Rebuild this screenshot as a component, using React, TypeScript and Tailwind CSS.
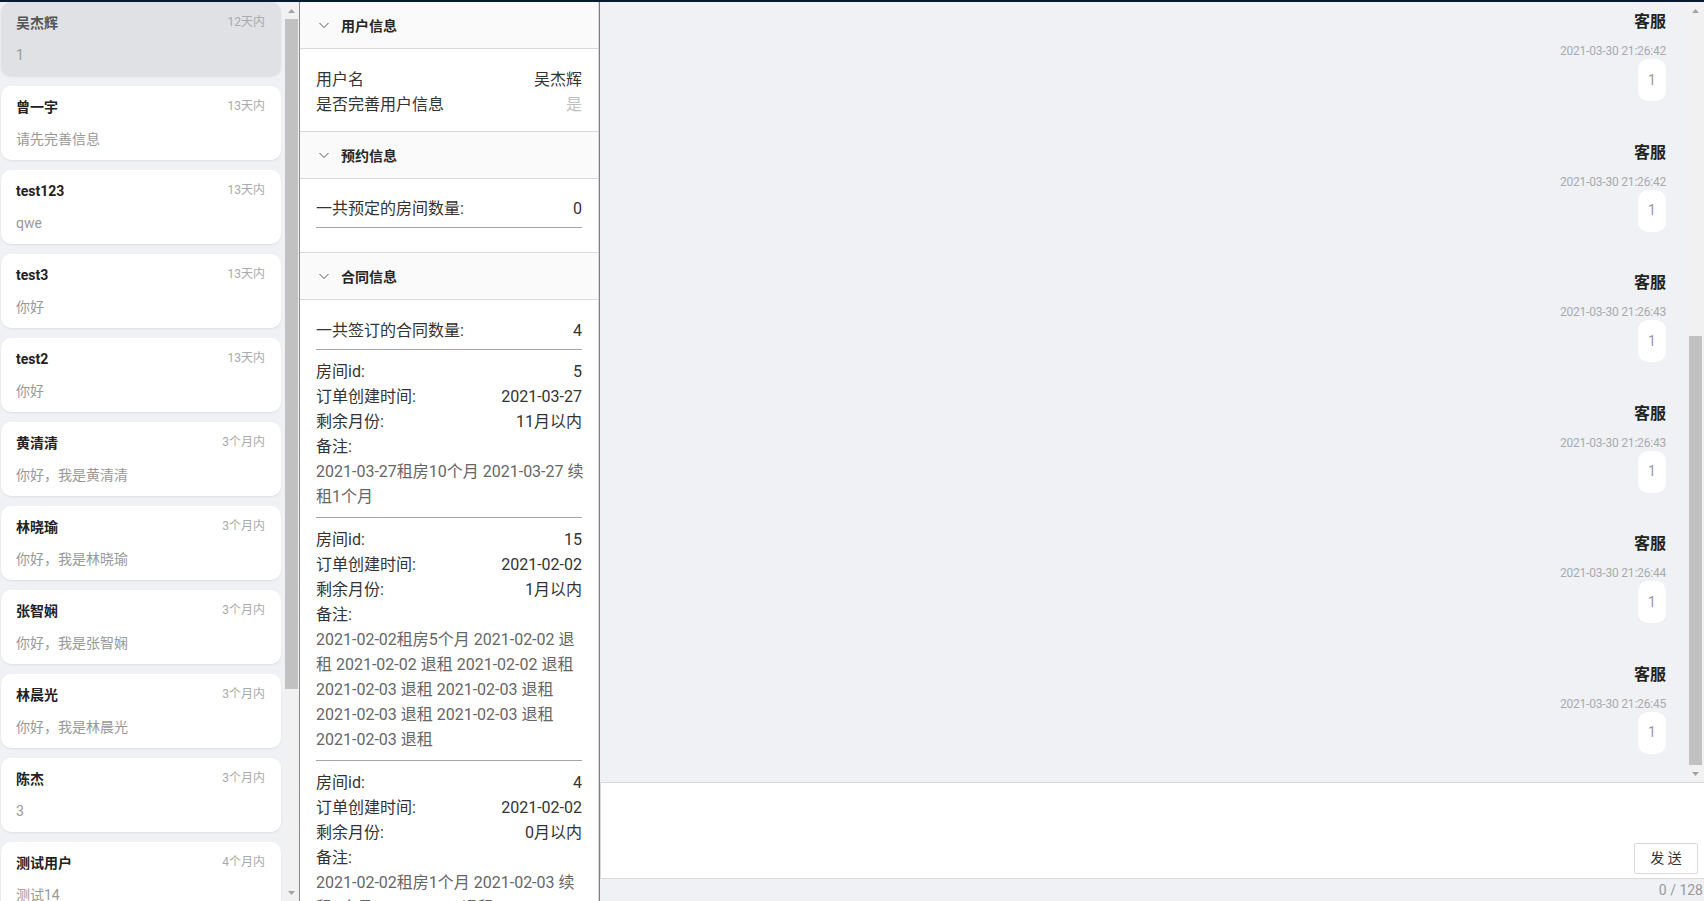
import React from 'react';

const contacts = [
  { name: '吴杰辉', time: '12天内', last: '1', active: true },
  { name: '曾一宇', time: '13天内', last: '请先完善信息' },
  { name: 'test123', time: '13天内', last: 'qwe' },
  { name: 'test3', time: '13天内', last: '你好' },
  { name: 'test2', time: '13天内', last: '你好' },
  { name: '黄清清', time: '3个月内', last: '你好，我是黄清清' },
  { name: '林晓瑜', time: '3个月内', last: '你好，我是林晓瑜' },
  { name: '张智娴', time: '3个月内', last: '你好，我是张智娴' },
  { name: '林晨光', time: '3个月内', last: '你好，我是林晨光' },
  { name: '陈杰', time: '3个月内', last: '3' },
  { name: '测试用户', time: '4个月内', last: '测试14' },
];

const contracts = [
  {
    id: '5',
    created: '2021-03-27',
    left: '11月以内',
    notes: ['2021-03-27租房10个月 2021-03-27 续', '租1个月'],
  },
  {
    id: '15',
    created: '2021-02-02',
    left: '1月以内',
    notes: [
      '2021-02-02租房5个月 2021-02-02 退',
      '租 2021-02-02 退租 2021-02-02 退租',
      '2021-02-03 退租 2021-02-03 退租',
      '2021-02-03 退租 2021-02-03 退租',
      '2021-02-03 退租',
    ],
  },
  {
    id: '4',
    created: '2021-02-02',
    left: '0月以内',
    notes: ['2021-02-02租房1个月 2021-02-03 续', '租1个月 2021-02-03 退租'],
  },
];

const messages = ['21:26:42', '21:26:42', '21:26:43', '21:26:43', '21:26:44', '21:26:45'];

function Arrow({ down }: { down?: boolean }) {
  return (
    <svg width="7" height="4" viewBox="0 0 7 4">
      <polygon points={down ? '0,0 7,0 3.5,4' : '0,4 7,4 3.5,0'} fill="#a3a3a3" />
    </svg>
  );
}

// fake classic scrollbar, thumb place is passed in as classes
function Scrollbar({ thumb }: { thumb: string }) {
  return (
    <div className="flex w-[15px] shrink-0 flex-col bg-[#f1f1f1]">
      <div className="flex h-[17px] shrink-0 items-center justify-center">
        <Arrow />
      </div>
      <div className="flex-1 min-h-0">
        <div className={'mx-[1px] bg-[#c1c1c1] ' + thumb} />
      </div>
      <div className="flex h-[17px] shrink-0 items-center justify-center">
        <Arrow down />
      </div>
    </div>
  );
}

function PanelHeader({ title }: { title: string }) {
  return (
    <div className="flex h-[47px] shrink-0 items-center border-b border-[#d9d9d9] bg-[#fafafa] pl-[18px]">
      <svg width="12" height="12" viewBox="0 0 12 12">
        <path d="M1.5 4 L6 8.5 L10.5 4" fill="none" stroke="#555" strokeWidth="1" />
      </svg>
      <span className="ml-[11px] mt-[2px] text-[14px] font-bold text-[#262626]">{title}</span>
    </div>
  );
}

function Row({ label, value, valueClass = 'text-[#333]' }: { label: string; value: string; valueClass?: string }) {
  return (
    <div className="flex h-[25px] items-center justify-between leading-[25px]">
      <span className="text-[#333]">{label}</span>
      <span className={valueClass}>{value}</span>
    </div>
  );
}

export default function App() {
  return (
    <div className="flex h-[901px] w-full flex-col overflow-hidden bg-[#f0f1f5] font-[Roboto,'Noto_Sans_CJK_SC',sans-serif]">
      <div className="h-[2px] shrink-0 bg-[#071a2f]" />
      <div className="flex min-h-0 flex-1">
        {/* contact list */}
        <aside className="flex w-[300px] shrink-0 border-r border-[#8a8a8a]">
          <div className="flex w-[284px] shrink-0 flex-col gap-[10px] overflow-hidden pl-[1px] pr-[3px]">
            {contacts.map((c) => (
              <div
                key={c.name}
                className={
                  'h-[74px] shrink-0 rounded-[10px] pl-[15px] pr-4 pt-[11px] shadow-[0_1px_2px_rgba(0,0,0,0.08)] ' +
                  (c.active ? 'bg-[#e0e1e5]' : 'bg-white')
                }
              >
                <div className="flex h-5 items-center justify-between">
                  <span className={'text-[14px] font-bold ' + (c.active ? 'text-[#555]' : 'text-[#222]')}>
                    {c.name}
                  </span>
                  <span className="-mt-[2px] text-[12px] text-[#aaa]">{c.time}</span>
                </div>
                <div className="mt-3 h-5 text-[14px] leading-5 text-[#999]">{c.last}</div>
              </div>
            ))}
          </div>
          <Scrollbar thumb="h-[670px]" />
        </aside>

        {/* user details */}
        <section className="flex w-[299px] shrink-0 flex-col overflow-hidden border-r border-[#d9d9d9] bg-white text-[16px]">
          <PanelHeader title="用户信息" />
          <div className="shrink-0 border-b border-[#d9d9d9] px-4 pt-[18px] pb-[14px]">
            <Row label="用户名" value="吴杰辉" />
            <Row label="是否完善用户信息" value="是" valueClass="text-[#bfbfbf]" />
          </div>

          <PanelHeader title="预约信息" />
          <div className="shrink-0 border-b border-[#d9d9d9] px-4 pt-[17px] pb-[24px]">
            <div className="border-b border-[#a6a6a6] pb-[6px]">
              <Row label="一共预定的房间数量:" value="0" />
            </div>
          </div>

          <PanelHeader title="合同信息" />
          <div className="px-4 pt-[18px]">
            <div className="border-b border-[#a6a6a6] pb-[6px]">
              <Row label="一共签订的合同数量:" value="4" />
            </div>
            {contracts.map((k) => (
              <div key={k.id} className="border-b border-[#a6a6a6] pt-[9px] pb-[8px]">
                <Row label="房间id:" value={k.id} />
                <Row label="订单创建时间:" value={k.created} />
                <Row label="剩余月份:" value={k.left} />
                <Row label="备注:" value="" />
                {k.notes.map((n, i) => (
                  <div key={i} className="h-[25px] whitespace-nowrap leading-[25px] text-[#666]">
                    {n}
                  </div>
                ))}
              </div>
            ))}
          </div>
        </section>

        {/* chat */}
        <main className="flex min-w-0 flex-1 flex-col border-l border-[#7f7f7f]">
          <div className="flex h-[780px] shrink-0">
            <div className="flex min-w-0 flex-1 flex-col overflow-hidden pr-[22px]">
              {messages.map((t, i) => (
                <div key={i} className="flex shrink-0 flex-col items-end pt-[8px] pb-[31.6px]">
                  <div className="text-[16px] font-bold leading-[24px] text-[#222]">客服</div>
                  <div className="mt-[9px] text-[12px] leading-4 tracking-[-0.2px] text-[#aaa]">2021-03-30 {t}</div>
                  <div className="flex h-[42px] w-[28px] items-center justify-center rounded-[10px] bg-white text-[14px] text-[#999]">
                    1
                  </div>
                </div>
              ))}
            </div>
            <div className="mr-[1px] flex">
              <Scrollbar thumb="mt-[317px] h-[429px]" />
            </div>
          </div>

          <div className="flex h-[97px] shrink-0 items-end justify-end border border-r-0 border-[#d9d9d9] bg-white pr-[6px] pb-[4px]">
            <button className="h-[31px] w-[64px] rounded-[2px] border border-[#d9d9d9] bg-white text-[14px] text-[#333]">
              发 送
            </button>
          </div>
          <div className="flex h-[22px] shrink-0 items-center justify-end pr-[1px] text-[14px] text-[#999]">0 / 128</div>
        </main>
      </div>
    </div>
  );
}
